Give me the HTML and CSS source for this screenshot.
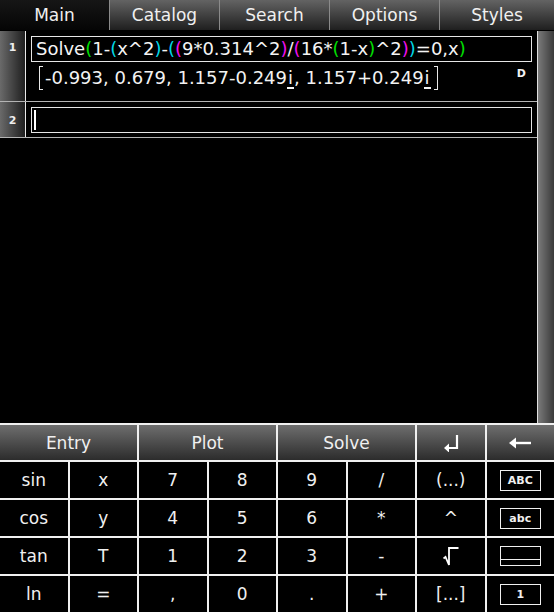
FILE: index.html
```html
<!DOCTYPE html>
<html>
<head>
<meta charset="utf-8">
<link rel="stylesheet" href="styles.css">
</head>
<body>
<div class="app">
  <div class="tabs">
    <div class="tab sel">Main</div>
    <div class="tab">Catalog</div>
    <div class="tab">Search</div>
    <div class="tab">Options</div>
    <div class="tab last">Styles</div>
  </div>
  <div class="sheet">
    <div class="rows">
      <div class="row r1">
        <div class="num">1</div>
        <div class="cell">
          <div class="inbox"><span>Solve</span><span class="g">(</span>1-<span class="c">(</span>x^2<span class="c">)</span>-<span class="c">(</span><span class="m">(</span>9*0.314^2<span class="m">)</span>/<span class="m">(</span>16*<span class="g">(</span>1-x<span class="g">)</span>^2<span class="m">)</span><span class="c">)</span>=0,x<span class="g">)</span></div>
          <div class="outline">
            <div class="result"><span class="brk lb"></span><span class="rtxt">-0.993, 0.679, 1.157-0.249<span class="im">i</span>, 1.157+0.249<span class="im">i</span></span><span class="brk rb"></span></div>
            <div class="mode">D</div>
          </div>
        </div>
      </div>
      <div class="row r2">
        <div class="num">2</div>
        <div class="cell">
          <div class="inbox empty"><span class="caret"></span></div>
        </div>
      </div>
    </div>
    <div class="scroll"></div>
  </div>
  <div class="keys">
    <div class="k top w2">Entry</div>
    <div class="k top w2">Plot</div>
    <div class="k top w2">Solve</div>
    <div class="k top"><svg width="16" height="18" viewBox="0 0 16 18"><path d="M14 1 V14 H5" fill="none" stroke="#fff" stroke-width="2.2"/><path d="M1 14 L6 9.5 V18.5 Z" fill="#fff"/></svg></div>
    <div class="k top"><svg width="22" height="12" viewBox="0 0 22 12"><path d="M5 6 H22" stroke="#fff" stroke-width="2.4"/><path d="M0 6 L7 0.5 V11.5 Z" fill="#fff"/></svg></div>

    <div class="k">sin</div>
    <div class="k">x</div>
    <div class="k">7</div>
    <div class="k">8</div>
    <div class="k">9</div>
    <div class="k">/</div>
    <div class="k">(...)</div>
    <div class="k"><span class="bx">ABC</span></div>

    <div class="k">cos</div>
    <div class="k">y</div>
    <div class="k">4</div>
    <div class="k">5</div>
    <div class="k">6</div>
    <div class="k">*</div>
    <div class="k">^</div>
    <div class="k"><span class="bx lo">abc</span></div>

    <div class="k">tan</div>
    <div class="k">T</div>
    <div class="k">1</div>
    <div class="k">2</div>
    <div class="k">3</div>
    <div class="k">-</div>
    <div class="k"><svg width="16" height="19" viewBox="0 0 16 19"><path d="M0.5 11.5 L2.5 10 L6 18 V1 H15.5" fill="none" stroke="#fff" stroke-width="1.8"/></svg></div>
    <div class="k"><span class="frac"><span class="ft"></span><span class="fb"></span></span></div>

    <div class="k">ln</div>
    <div class="k">=</div>
    <div class="k">,</div>
    <div class="k">0</div>
    <div class="k">.</div>
    <div class="k">+</div>
    <div class="k">[...]</div>
    <div class="k"><span class="bx one">1</span></div>
  </div>
</div>
</body>
</html>
```

FILE: styles.css
```css
html, body {
  margin: 0;
  padding: 0;
  background: #000;
}
body {
  font-family: "DejaVu Sans", "Liberation Sans", sans-serif;
  color: #f2f2f2;
}
.app {
  width: 554px;
  height: 612px;
  display: flex;
  flex-direction: column;
  overflow: hidden;
}
.tabs {
  display: grid;
  grid-template-columns: 110px 110px 110px 110px 114px;
  height: 30px;
  margin-bottom: 1px;
}
.tab {
  background: linear-gradient(#636363, #1f1f1f);
  border-right: 1px solid #8a8a8a;
  font-size: 17px;
  line-height: 30px;
  text-align: center;
  color: #f0f0f0;
}
.tab.sel {
  background: linear-gradient(#161616, #050505);
}
.tab.last {
  border-right: none;
}
.sheet {
  flex: 1;
  display: flex;
}
.rows {
  flex: 1;
  display: flex;
  flex-direction: column;
}
.row {
  display: flex;
  border-bottom: 1px solid #b4b4b4;
}
.r1 { height: 70px; }
.r2 { height: 35px; }
.num {
  width: 26px;
  border-right: 1px solid #e8e8e8;
  background: linear-gradient(90deg, #6a6a6a, #1e1e1e);
  font-size: 11px;
  font-weight: bold;
  text-align: center;
  padding-top: 10px;
  box-sizing: border-box;
  color: #eee;
}
.r2 .num { padding-top: 12px; }
.cell {
  flex: 1;
  padding: 5px 5px 0 5px;
}
.inbox {
  height: 26px;
  border: 1px solid #e6e6e6;
  box-sizing: border-box;
  font-size: 18px;
  line-height: 24px;
  padding-left: 4px;
  white-space: nowrap;
  color: #f4f4f4;
}
.g { color: #00e000; }
.c { color: #00d8e8; }
.m { color: #f010f0; }
.inbox.empty {
  padding-left: 2px;
  padding-top: 2px;
}
.caret {
  display: block;
  width: 2px;
  height: 20px;
  background: #fff;
}
.outline {
  display: flex;
  justify-content: space-between;
  padding-left: 8px;
  padding-right: 6px;
}
.result {
  display: flex;
  align-items: center;
  padding-top: 4px;
}
.rtxt {
  font-size: 18px;
  line-height: 24px;
  padding: 0 3px 0 2px;
  white-space: nowrap;
}
.brk {
  display: inline-block;
  width: 3px;
  height: 22px;
  border-top: 1px solid #e8e8e8;
  border-bottom: 1px solid #e8e8e8;
}
.lb { border-left: 1px solid #e8e8e8; }
.rb { border-right: 1px solid #e8e8e8; }
.im {
  display: inline-block;
  line-height: 18px;
  border-bottom: 2px solid #f4f4f4;
  padding: 0 1px;
}
.mode {
  font-size: 11px;
  font-weight: bold;
  padding-top: 5px;
}
.scroll {
  width: 16px;
  border-left: 1px solid #e0e0e0;
  background: linear-gradient(90deg, #7a7a7a, #3a3a3a);
}
.keys {
  display: grid;
  grid-template-columns: repeat(8, 1fr);
  grid-template-rows: 35px 36px 36px 36px 36px;
  gap: 2px;
  padding-top: 2px;
  background: #f0f0f0;
  height: 189px;
  box-sizing: border-box;
}
.k {
  background: #000;
  display: flex;
  align-items: center;
  justify-content: center;
  font-size: 17px;
  color: #f0f0f0;
}
.k.top {
  background: linear-gradient(#6e6e6e, #2c2c2c);
}
.w2 { grid-column: span 2; }
.bx {
  display: block;
  width: 41px;
  height: 21px;
  box-sizing: border-box;
  border: 1px solid #f0f0f0;
  font-size: 11px;
  font-weight: bold;
  line-height: 19px;
  text-align: center;
}
.frac {
  display: flex;
  flex-direction: column;
  width: 41px;
  height: 20px;
  box-sizing: border-box;
  border: 1px solid #f0f0f0;
}
.ft {
  height: 12px;
  border-bottom: 1px solid #f0f0f0;
}
.fb { flex: 1; }
```
